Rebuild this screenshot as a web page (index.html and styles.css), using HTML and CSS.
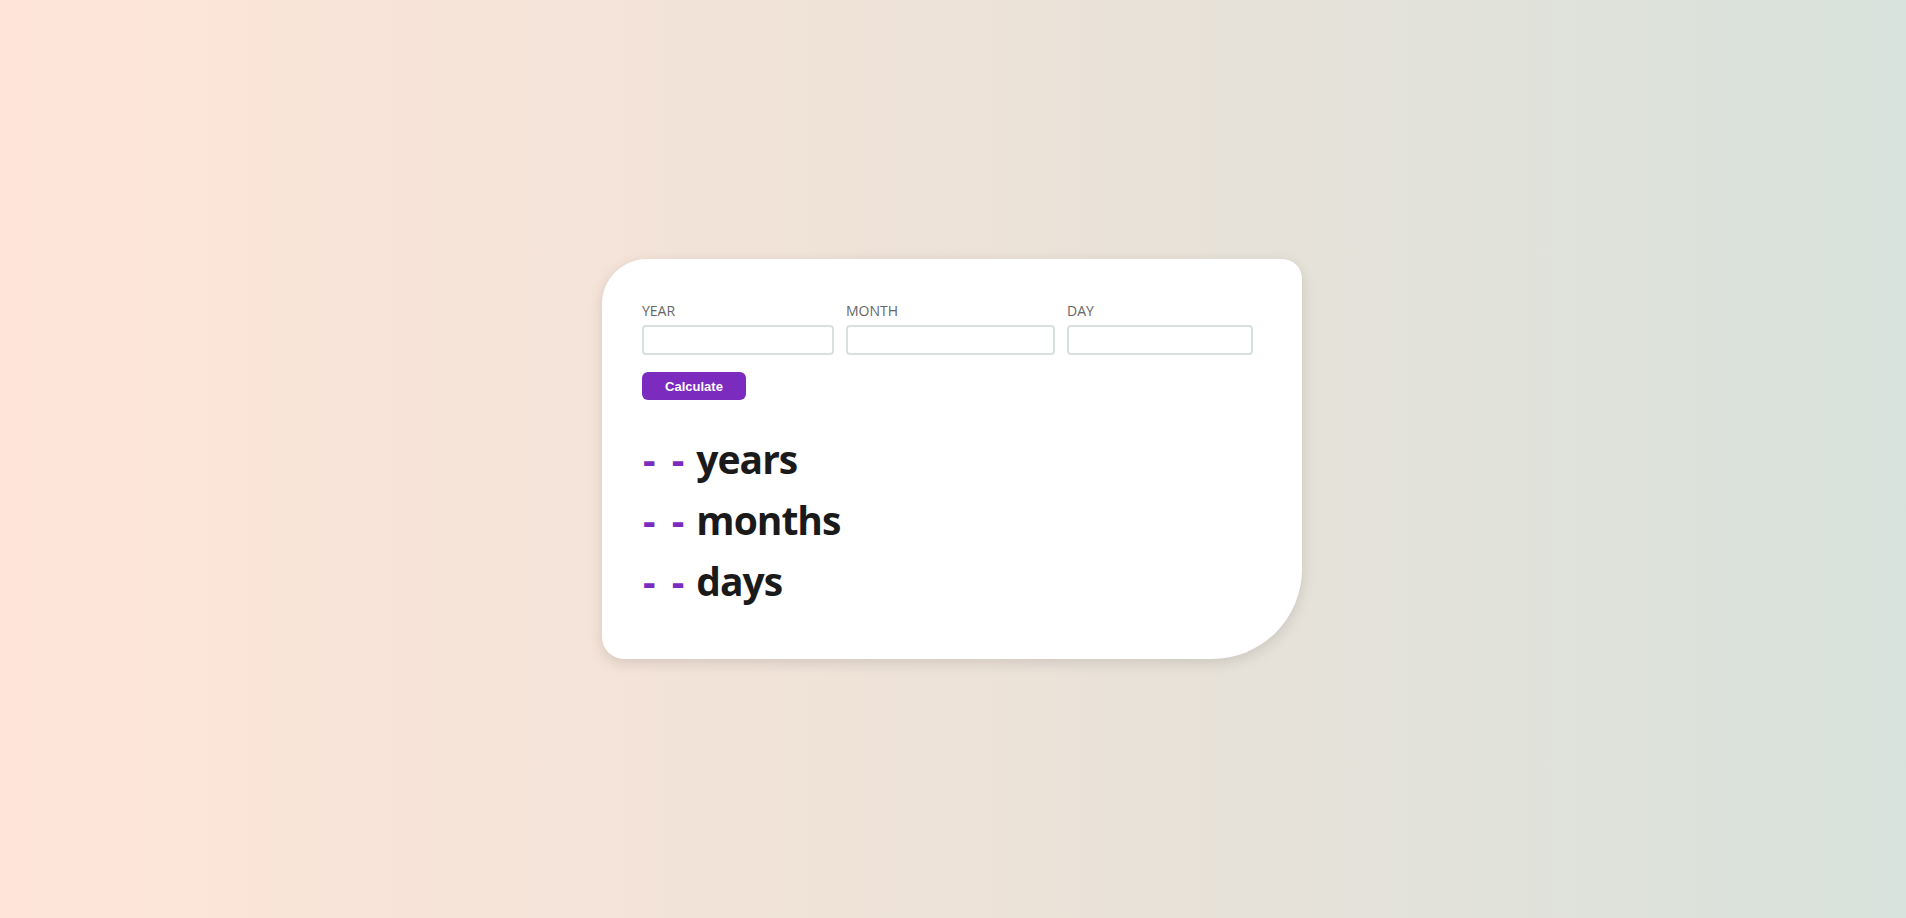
FILE: index.html
```html
<!DOCTYPE html>
<html lang="en">
<head>
    <meta charset="UTF-8">
    <meta name="viewport" content="width=device-width, initial-scale=1.0">
    <title>Age Calculator</title>
    <link rel="stylesheet" href="styles.css">
</head>
<body>
    <div class="card">
        <form id="form">
            <div class="inputs">
                <div class="field">
                    <label for="year">YEAR</label>
                    <input id="year" type="number">
                </div>
                <div class="field">
                    <label for="month">MONTH</label>
                    <input id="month" type="number">
                </div>
                <div class="field">
                    <label for="day">DAY</label>
                    <input id="day" type="number">
                </div>
            </div>
            <button type="submit">Calculate</button>
        </form>

        <div class="results">
            <p><span id="years">- -</span> years</p>
            <p><span id="months">- -</span> months</p>
            <p><span id="days">- -</span> days</p>
        </div>
    </div>
</body>
</html>
```

FILE: styles.css
```css
body {
    margin: 0;
    height: 100vh;
    display: flex;
    align-items: center;
    justify-content: center;
    background: linear-gradient(to right, #ffe5d9, #ebe2d8 55%, #d8e2dc);
    font-family: 'Open Sans', sans-serif;
}

.card {
    width: 620px;
    padding: 42px 40px 48px 40px;
    margin-left: -2px;
    background-color: white;
    border-radius: 45px 20px 90px 22px;
    box-shadow: 0 4px 14px rgba(0, 0, 0, 0.12);
}

.inputs {
    display: grid;
    grid-template-columns: 192px 209px 186px;
    gap: 12px;
}

.field label {
    display: block;
    color: #666;
    font-size: 14px;
    font-weight: 500;
    margin-bottom: 5px;
}

.field input {
    display: block;
    box-sizing: border-box;
    width: 100%;
    height: 30px;
    border: 2px solid #d8e2dc;
    border-radius: 4px;
    font-size: 14px;
    padding: 0 8px;
}

.field input:focus {
    outline: 0;
}

button {
    margin-top: 17px;
    width: 104px;
    height: 28px;
    color: white;
    background-color: #7b2cbf;
    border: none;
    border-radius: 6px;
    font-family: 'Liberation Sans', Arial, sans-serif;
    font-size: 13px;
    font-weight: bold;
}

.results {
    margin-top: 28px;
}

.results p {
    margin: 0;
    color: #1a1a1a;
    font-size: 39px;
    font-weight: bold;
    line-height: 61px;
    letter-spacing: -1px;
}

.results span {
    color: #7b2cbf;
    letter-spacing: 0;
    word-spacing: 6px;
    margin-left: 1px;
    margin-right: 3px;
}
```
